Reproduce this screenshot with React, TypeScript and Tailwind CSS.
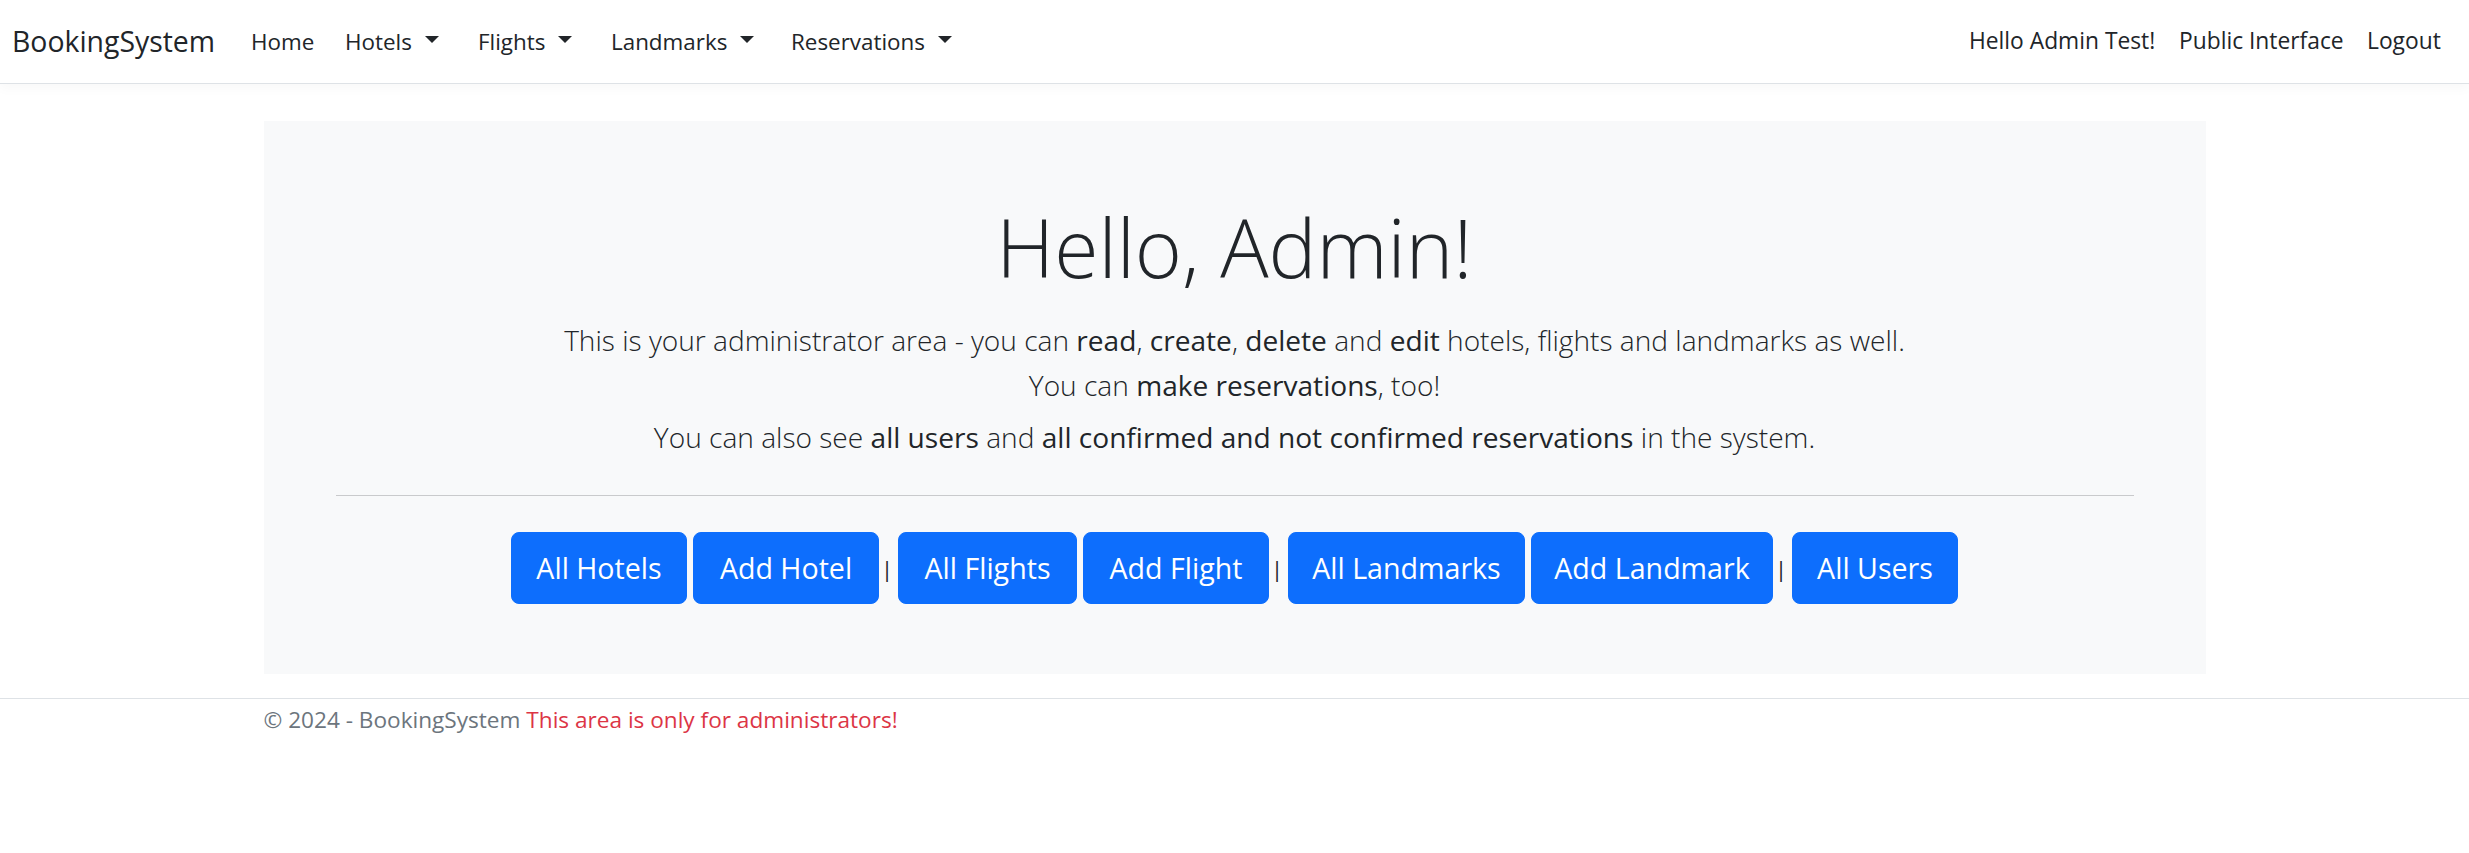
import React from "react";

function Caret() {
  return (
    <span className="ml-[13px] inline-block h-0 w-0 border-x-[7px] border-t-[7px] border-x-transparent border-t-[#212529] translate-y-[-2px]" />
  );
}

function Btn({ label, w }: { label: string; w: string }) {
  return (
    <a
      href="#"
      className={`${w} h-[72px] rounded-[8px] bg-[#0d6efd] text-white text-[28.6px] flex items-center justify-center border border-[#0d6efd]`}
    >
      {label}
    </a>
  );
}

function Sep() {
  return (
    <span className="w-[7px] text-left text-[22px] text-[#212529] leading-none -translate-x-[4px]">|</span>
  );
}

export default function App() {
  return (
    <div className="min-h-[853px] bg-white font-['Open_Sans',sans-serif] text-[#212529]">
      <nav className="h-[84px] border-b border-[#dee2e6] shadow-[0_4px_12px_rgba(0,0,0,0.03)] flex items-center justify-between pl-[12px] pr-[28px]">
        <div className="flex items-center">
          <a href="#" className="w-[239px] text-[28.4px] leading-[1.5] text-[#212529]">
            BookingSystem
          </a>
          <div className="flex items-center text-[22.4px] leading-[1.5] text-[#212529]">
            <a href="#" className="w-[94px]">Home</a>
            <a href="#" className="w-[133px] flex items-center">Hotels<Caret /></a>
            <a href="#" className="w-[133px] flex items-center">Flights<Caret /></a>
            <a href="#" className="w-[180px] flex items-center">Landmarks<Caret /></a>
            <a href="#" className="flex items-center">Reservations<Caret /></a>
          </div>
        </div>
        <div className="flex items-center text-[22.8px] leading-[1.5] text-[#212529]">
          <span className="w-[210px]">Hello Admin Test!</span>
          <a href="#" className="w-[188px]">Public Interface</a>
          <a href="#" className="w-[74px]">Logout</a>
        </div>
      </nav>

      <div className="w-[1942px] mx-auto mt-[37px]">
        <div className="bg-[#f8f9fa] pt-[76px] pb-[70px] px-[72px] text-center">
          <h1 className="text-[80.5px] font-light leading-[100px] text-[#212529]">Hello, Admin!</h1>
          <p className="mt-[21px] text-[28.1px] font-light leading-[45px]">
            This is your administrator area - you can <b className="font-normal">read</b>,{" "}
            <b className="font-normal">create</b>, <b className="font-normal">delete</b> and{" "}
            <b className="font-normal">edit</b> hotels, flights and landmarks as well.
            <br />
            You can <b className="font-normal">make reservations</b>, too!
          </p>
          <p className="mt-[7px] text-[28.1px] font-light leading-[45px]">
            You can also see <b className="font-normal">all users</b> and{" "}
            <b className="font-normal">all confirmed and not confirmed reservations</b> in the system.
          </p>
          <div className="mt-[35px] h-px bg-[#c9cacc]" />
          <div className="mt-[36px] flex items-center justify-center gap-[6px]">
            <Btn label="All Hotels" w="w-[176px]" />
            <Btn label="Add Hotel" w="w-[186px]" />
            <Sep />
            <Btn label="All Flights" w="w-[179px]" />
            <Btn label="Add Flight" w="w-[186px]" />
            <Sep />
            <Btn label="All Landmarks" w="w-[237px]" />
            <Btn label="Add Landmark" w="w-[242px]" />
            <Sep />
            <Btn label="All Users" w="w-[166px]" />
          </div>
        </div>
      </div>

      <footer className="mt-[24px] border-t border-[#dee2e6]">
        <div className="w-[1942px] mx-auto pt-[6px] text-[22.6px] leading-[30px] text-[#6c757d]">
          © 2024 - BookingSystem <span className="text-[#dc3545]">This area is only for administrators!</span>
        </div>
      </footer>
    </div>
  );
}
